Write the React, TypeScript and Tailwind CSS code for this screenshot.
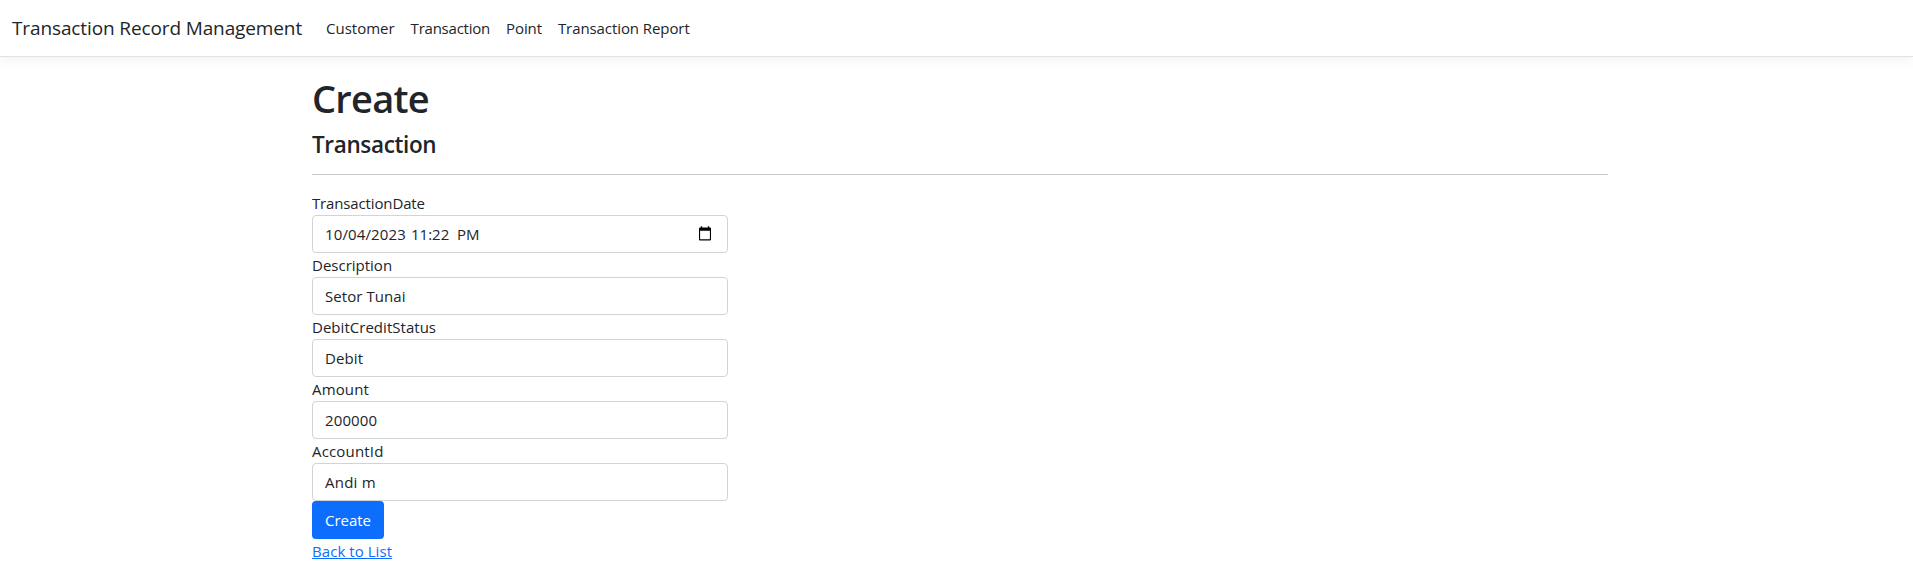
const navLinks = [
  { label: "Customer", spacing: "tracking-[0px]" },
  { label: "Transaction", spacing: "tracking-[-0.23px]" },
  { label: "Point", spacing: "tracking-[-0.1px]" },
  { label: "Transaction Report", spacing: "tracking-[-0.08px]" },
];

const fields = [
  { label: "Description", value: "Setor Tunai", labelSpacing: "tracking-[0px]", valueSpacing: "tracking-[0.06px]" },
  { label: "DebitCreditStatus", value: "Debit", labelSpacing: "tracking-[0.03px]", valueSpacing: "tracking-[0.1px]" },
  { label: "Amount", value: "200000", labelSpacing: "tracking-[0.15px]", valueSpacing: "tracking-[0.13px]" },
  { label: "AccountId", value: "Andi m", labelSpacing: "tracking-[0.17px]", valueSpacing: "tracking-[0.25px]" },
];

function CalendarIcon() {
  return (
    <svg width="14" height="16" viewBox="0 0 14 16" className="shrink-0" aria-hidden="true">
      <path d="M2.800 0.300h1.400v1.200h5.600V0.300h1.400v1.200h0.800a1 1 0 0 1 1 1V13.500a1 1 0 0 1-1 1H2a1 1 0 0 1-1-1V2.500a1 1 0 0 1 1-1h0.800zM2.100 4.800v8.500h9.800V4.800z" fill="#000" fillRule="evenodd" />
    </svg>
  );
}

function Navbar() {
  return (
    <header className="flex h-[57px] items-center border-b border-[#dee2e6] bg-white px-3 shadow-[0_4px_12px_rgba(0,0,0,0.05)]">
      <a href="#" className="mr-6 w-[290px] shrink-0 whitespace-nowrap text-[19px] leading-[30px] tracking-[-0.12px]">
        Transaction Record Management
      </a>
      <nav className="flex gap-4">
        {navLinks.map((l) => (
          <a key={l.label} href="#" className={`whitespace-nowrap ${l.spacing}`}>
            {l.label}
          </a>
        ))}
      </nav>
    </header>
  );
}

export default function App() {
  return (
    <div className="min-h-[572px] overflow-hidden bg-white font-['Open_Sans','Noto_Sans',sans-serif] text-[15px] leading-6 text-[#212529]">
      <Navbar />
      <main className="ml-[312px] w-[1296px] pt-4">
        <h1 className="mb-2 h-12 text-[38px] font-semibold leading-[50px] tracking-[-0.75px]">Create</h1>
        <h4 className="mb-2 h-[29px] text-[22.5px] font-semibold leading-[32px] tracking-[-0.35px]">Transaction</h4>
        <hr className="mb-4 mt-4 border-t border-[#c8c9ca]" />
        <form className="w-[416px]">
          <div className="tracking-[-0.14px]">TransactionDate</div>
          <div className="flex h-[38px] items-center justify-between rounded border border-[#ced4da] pl-3 pr-[15px]">
            <div className="flex">
              <span className="w-[86px] tracking-[0.13px]">10/04/2023</span>
              <span className="w-[46px]">11:22</span>
              <span>PM</span>
            </div>
            <CalendarIcon />
          </div>
          {fields.map((f) => (
            <div key={f.label}>
              <div className={f.labelSpacing}>{f.label}</div>
              <div className={`flex h-[38px] items-center rounded border border-[#ced4da] px-3 ${f.valueSpacing}`}>{f.value}</div>
            </div>
          ))}
          <button type="button" className="block h-[38px] w-[72px] rounded bg-[#0d6efd] text-center text-white">
            Create
          </button>
        </form>
        <a href="#" className="block w-fit tracking-[0.06px] text-[#0d6efd] underline">Back to List</a>
      </main>
    </div>
  );
}
